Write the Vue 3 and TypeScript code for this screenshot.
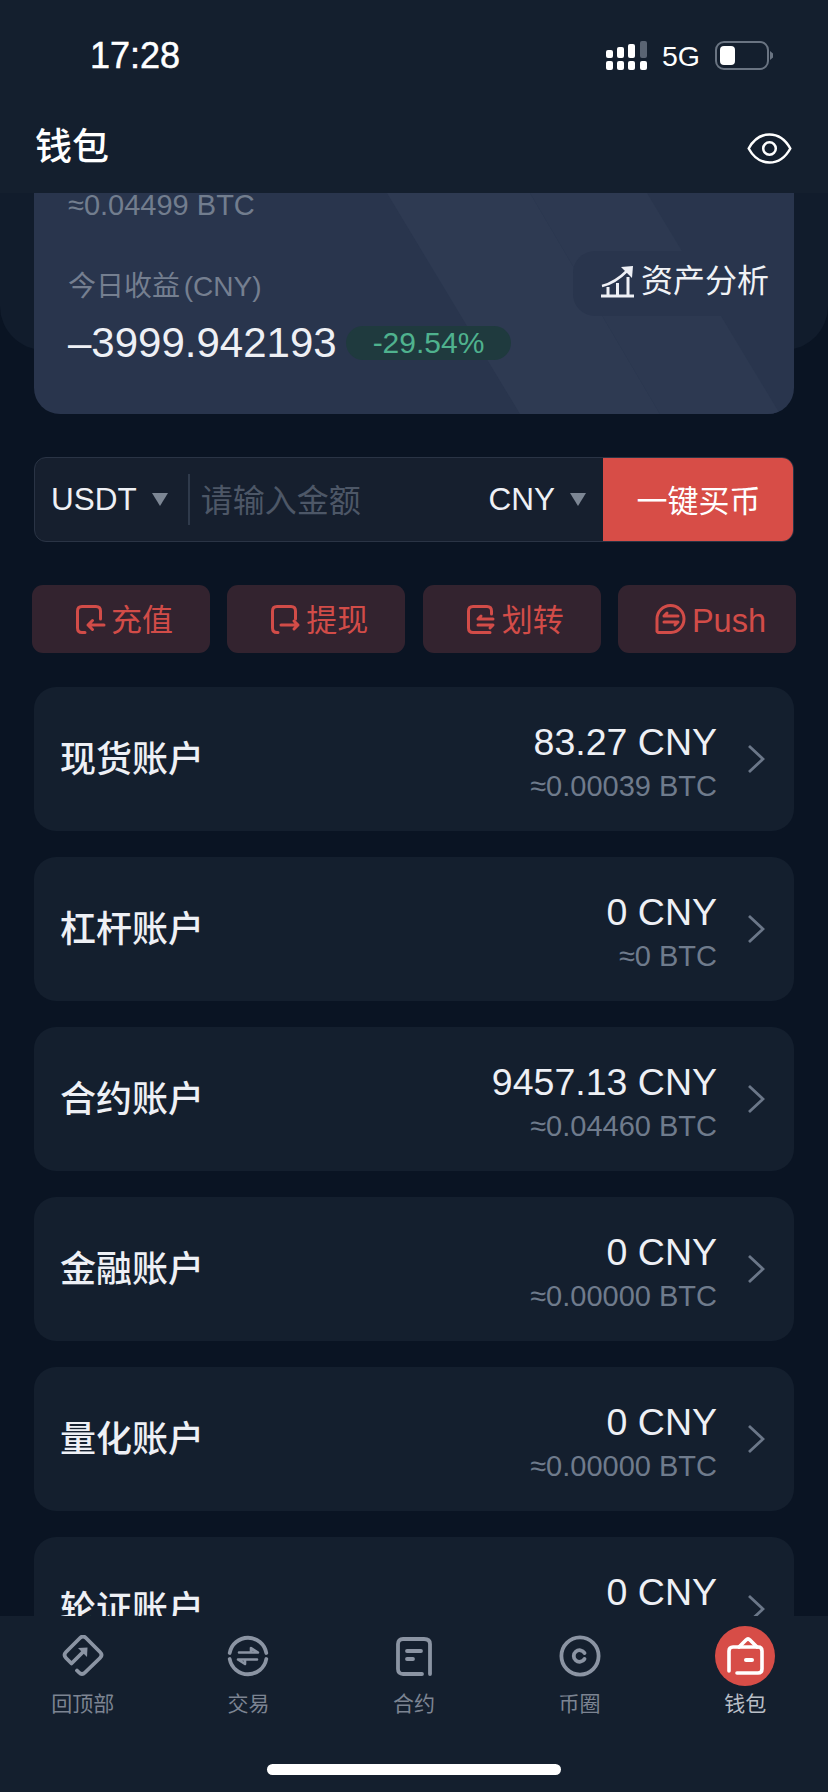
<script setup lang="ts">
interface Account { name: string; value: string; btc: string }
const accounts: Account[] = [
  { name: '现货账户', value: '83.27 CNY', btc: '≈0.00039 BTC' },
  { name: '杠杆账户', value: '0 CNY', btc: '≈0 BTC' },
  { name: '合约账户', value: '9457.13 CNY', btc: '≈0.04460 BTC' },
  { name: '金融账户', value: '0 CNY', btc: '≈0.00000 BTC' },
  { name: '量化账户', value: '0 CNY', btc: '≈0.00000 BTC' },
  { name: '轮证账户', value: '0 CNY', btc: '≈0.00000 BTC' },
]
</script>

<template>
  <div class="page">
    <header class="top">
      <div class="status">
        <span class="time">17:28</span>
        <div class="status-right">
          <svg class="signal" width="42" height="30" viewBox="0 0 42 30" fill="#fff">
            <rect x="0" y="20" width="7" height="9" rx="2" />
            <rect x="11" y="20" width="7" height="9" rx="2" />
            <rect x="22" y="20" width="7" height="9" rx="2" />
            <rect x="34" y="20" width="7" height="9" rx="2" />
            <rect x="0" y="9" width="7" height="8" rx="2" />
            <rect x="11" y="6" width="7" height="11" rx="2" />
            <rect x="22" y="3" width="7" height="14" rx="2" />
            <rect x="34" y="0" width="7" height="17" rx="2" fill="#5a6473" />
          </svg>
          <span class="net">5G</span>
          <svg class="battery" width="59" height="30" viewBox="0 0 59 30">
            <rect x="1" y="1" width="52" height="27" rx="8" fill="none" stroke="#6a7482" stroke-width="2" />
            <rect x="5" y="5" width="15" height="19" rx="4" fill="#fff" />
            <path d="M55 10 L58 12.5 V16.5 L55 19 Z" fill="#6a7482" />
          </svg>
        </div>
      </div>
      <div class="title-row">
        <h1 class="title">钱包</h1>
        <svg class="eye" width="45" height="31" viewBox="0 0 46 32" fill="none" stroke="#fff" stroke-width="2.6">
          <path d="M1.5 16 C7 6 14.5 1.5 23 1.5 S39 6 44.5 16 C39 26 31.5 30.5 23 30.5 S7 26 1.5 16 Z" stroke-linejoin="round" />
          <circle cx="23" cy="16" r="6.5" />
        </svg>
      </div>
    </header>

    <main class="scroll">
      <div class="glow"></div>
      <section class="asset">
        <svg class="stripes" width="760" height="221" viewBox="0 0 760 221">
          <path d="M353 0 H496 L626 221 H486 Z" fill="#2e3a52" />
          <path d="M496 0 H613 L746 221 H626 Z" fill="#2d3951" />
        </svg>
        <div class="asset-btc">≈0.04499 BTC</div>
        <div class="asset-body">
          <div class="asset-left">
            <div class="asset-label">今日收益 (CNY)</div>
            <div class="asset-row">
              <span class="asset-num">–3999.942193</span>
              <span class="pill">-29.54%</span>
            </div>
          </div>
          <div class="analyze">
            <svg width="34" height="32" viewBox="0 0 34 32" fill="none" stroke="#eef0f5" stroke-width="2.6">
              <path d="M0 30 H33" stroke-width="3.2" />
              <path d="M1 20 C10 18 19 12 27 4" />
              <path d="M20 1 L32 0 L31 12 Z" fill="#eef0f5" stroke="none" />
              <path d="M7 29 V21 M16.5 29 V17 M27 29 V11" stroke-width="3" />
            </svg>
            <span>资产分析</span>
          </div>
        </div>
      </section>

      <section class="buy">
        <div class="sel">
          <span>USDT</span><i class="tri"></i>
        </div>
        <span class="divider"></span>
        <span class="placeholder">请输入金额</span>
        <div class="sel cny">
          <span>CNY</span><i class="tri"></i>
        </div>
        <button class="buy-btn">一键买币</button>
      </section>

      <section class="actions">
        <div class="action">
          <svg width="30" height="29" viewBox="0 0 30 29" fill="none" stroke="#d24c48" stroke-width="3" stroke-linecap="round" stroke-linejoin="round">
            <path d="M9 27.5 H6 Q1.5 27.5 1.5 23 V6 Q1.5 1.5 6 1.5 H20 Q24.5 1.5 24.5 6 V14" />
            <path d="M28 20 H12 M16.5 15.5 L12 20 L16.5 24.5" />
          </svg>
          <span>充值</span>
        </div>
        <div class="action">
          <svg width="30" height="29" viewBox="0 0 30 29" fill="none" stroke="#d24c48" stroke-width="3" stroke-linecap="round" stroke-linejoin="round">
            <path d="M7 27.5 H6 Q1.5 27.5 1.5 23 V6 Q1.5 1.5 6 1.5 H20 Q24.5 1.5 24.5 6 V14" />
            <path d="M10 20 H27 M23 16 L27 20 L23 24" />
          </svg>
          <span>提现</span>
        </div>
        <div class="action">
          <svg width="30" height="29" viewBox="0 0 30 29" fill="none" stroke="#d24c48" stroke-width="3" stroke-linecap="round" stroke-linejoin="round">
            <path d="M23 27.5 H6 Q1.5 27.5 1.5 23 V6 Q1.5 1.5 6 1.5 H20 Q24.5 1.5 24.5 6 V9" />
            <path d="M26 14 H11 L14 11 M11 20 H26 L23 23" />
          </svg>
          <span>划转</span>
        </div>
        <div class="action">
          <svg width="32" height="30" viewBox="0 0 32 30" fill="none" stroke="#d24c48" stroke-width="3" stroke-linecap="round" stroke-linejoin="round">
            <path d="M3 28.5 H16 A13.5 13.5 0 1 0 2 15 V27.5 Z" />
            <path d="M23 12 H9 L12 9 M9 18 H23 L20 21" />
          </svg>
          <span class="latin">Push</span>
        </div>
      </section>

      <section class="list">
        <div v-for="a in accounts" :key="a.name" class="row">
          <span class="row-name">{{ a.name }}</span>
          <div class="row-vals">
            <div class="row-val">{{ a.value }}</div>
            <div class="row-btc">{{ a.btc }}</div>
          </div>
          <svg class="chev" width="18" height="30" viewBox="0 0 18 30" fill="none" stroke="#6b7789" stroke-width="2.8">
            <path d="M2 2 L16 15 L2 28" />
          </svg>
        </div>
      </section>
    </main>

    <nav class="tabs">
      <div class="tab">
        <div class="tab-icon">
          <svg width="42" height="42" viewBox="0 0 42 42" fill="none" stroke="#8b94a3" stroke-width="3.8" stroke-linecap="round" stroke-linejoin="round">
            <path d="M15 35.5 L17 37.5 Q20 40.5 23 37.5 L38 23 Q41 20 38 17 L24 3 Q21 0 18 3 L4 17 Q1 20 4 23 L9.5 28.5 L21 17" />
            <path d="M16 13 L25.5 12.5 L25 22 Z" fill="#8b94a3" stroke="none" />
          </svg>
        </div>
        <span>回顶部</span>
      </div>
      <div class="tab">
        <div class="tab-icon">
          <svg width="42" height="42" viewBox="0 0 42 42" fill="none" stroke="#8b94a3" stroke-width="3.8" stroke-linecap="round">
            <path d="M2.7 18 A18.6 18.6 0 0 1 39.3 18" />
            <path d="M2.7 24 A18.6 18.6 0 0 0 39.3 24" />
            <path d="M12 17.5 H31 L24 13 V17.5" stroke-width="2.6" stroke-linejoin="round" />
            <path d="M30 24.5 H11 L18 29 V24.5" stroke-width="2.6" stroke-linejoin="round" />
          </svg>
        </div>
        <span>交易</span>
      </div>
      <div class="tab">
        <div class="tab-icon">
          <svg width="36" height="39" viewBox="0 0 36 39" fill="none" stroke="#8b94a3" stroke-width="3.8" stroke-linecap="round" stroke-linejoin="round">
            <path d="M26 37 H7 Q2 37 2 32 V7 Q2 2 7 2 H28 Q34 2 34 7 V37" />
            <path d="M11 14 H25 M11 22 H17" />
          </svg>
        </div>
        <span>合约</span>
      </div>
      <div class="tab">
        <div class="tab-icon">
          <svg width="42" height="42" viewBox="0 0 42 42" fill="none" stroke="#8b94a3" stroke-width="3.8" stroke-linecap="round">
            <circle cx="21" cy="21" r="18.6" />
            <path d="M25.5 18 A5.8 5.8 0 1 0 25.5 24" stroke-width="3.8" />
          </svg>
        </div>
        <span>币圈</span>
      </div>
      <div class="tab active">
        <div class="tab-icon">
          <span class="wallet">
            <svg width="38" height="38" viewBox="0 0 38 38" fill="none" stroke="#fff" stroke-width="3.6" stroke-linecap="round" stroke-linejoin="round">
              <path d="M3 34 V14 Q3 10 7 10 H32 Q36 10 36 14 V32 Q36 36 32 36 H11" />
              <path d="M13 10 L20 3 Q22 1 24 3 L31 10" />
              <path d="M20 23 H26" stroke-width="4" />
            </svg>
          </span>
        </div>
        <span>钱包</span>
      </div>
      <div class="indicator"></div>
    </nav>
  </div>
</template>

<style>
html, body { margin: 0; background: #0a1423; }
</style>

<style scoped>
.page {
  width: 828px; height: 1792px; display: flex; flex-direction: column; overflow: hidden;
  background: #0a1423; color: #eef0f5; position: relative;
  font-family: "Liberation Sans", "Noto Sans CJK SC", sans-serif;
}
.top { height: 193px; flex: none; background: #141f2e; display: flex; flex-direction: column; }
.status { height: 111px; display: flex; justify-content: space-between; align-items: flex-start; padding: 0 54px 0 90px; }
.time { font-size: 36px; line-height: 40px; margin-top: 36px; color: #fff; -webkit-text-stroke: .5px #fff; }
.status-right { display: flex; align-items: center; margin-top: 41px; }
.net { font-size: 28.5px; line-height: 30px; color: #fff; margin: 0 15px 0 14px; }
.signal, .battery { display: block; }
.title-row { display: flex; justify-content: space-between; align-items: center; padding: 0 36px 0 35px; margin-top: 6px; }
.title { margin: 0; font-size: 37px; line-height: 62px; font-weight: 500; color: #fff; }
.scroll { flex: 1; min-height: 0; overflow: hidden; position: relative; padding: 0 34px; }
.glow { position: absolute; left: 0; right: 0; top: 0; height: 157px; background: #111c2c; border-radius: 0 0 44px 44px; }
.asset { position: relative; height: 221px; background: #29354d; border-radius: 0 0 26px 26px; overflow: hidden; }
.stripes { position: absolute; inset: 0; }
.asset-btc { position: relative; font-size: 29px; line-height: 24px; padding: 0 0 0 34px; color: #727d8e; }
.asset-body { position: relative; display: flex; justify-content: space-between; align-items: flex-start; margin-top: 50px; }
.asset-left { padding-left: 34px; }
.asset-label { font-size: 28px; line-height: 40px; color: #757f90; word-spacing: -4px; }
.asset-row { display: flex; align-items: center; margin-top: 12px; }
.asset-num { font-size: 42px; line-height: 48px; color: #eef0f5; }
.pill { margin-left: 9px; height: 34px; line-height: 34px; padding: 0 27px; border-radius: 17px; background: #1f3a3e; color: #4fb28e; font-size: 30px; }
.analyze { display: flex; align-items: center; gap: 6px; height: 65px; margin-top: -16px; padding: 0 25px 0 28px; background: #29354d; border-radius: 22px 0 0 22px; font-size: 32px; color: #f0f2f6; }
.analyze span { padding-bottom: 12px; }
.analyze svg { margin-bottom: 3px; }
.buy { display: flex; align-items: center; height: 85px; box-sizing: border-box; margin-top: 43px; background: #161f2e; border: 1px solid #2a3445; border-radius: 12px; overflow: hidden; }
.sel { display: flex; align-items: center; font-size: 31.5px; color: #eef0f5; padding-left: 16px; gap: 15px; }
.tri { width: 0; height: 0; border-left: 8.5px solid transparent; border-right: 8.5px solid transparent; border-top: 13px solid #7c8694; }
.divider { width: 2px; height: 51px; background: #2f3a4b; margin-left: 20px; }
.placeholder { font-size: 32px; color: #4d5767; margin-left: 11px; flex: 1; padding-bottom: 4px; }
.cny { padding: 0; margin-right: 17px; gap: 15px; }
.buy-btn { width: 191px; height: 85px; flex: none; border: 0; background: #d74d47; color: #fff; font: inherit; font-size: 31px; padding: 0 0 2px; margin-right: -1px; }
.actions { display: grid; grid-template-columns: repeat(4, 178px); justify-content: space-between; margin: 43px -2px 0; }
.action { height: 68px; box-sizing: border-box; padding-left: 7px; background: #33232f; border-radius: 11px; display: flex; align-items: center; justify-content: center; gap: 5px; color: #d24c48; font-size: 31px; }
.action span { padding-bottom: 4px; }
.action .latin { padding: 4px 0 0; font-size: 32.5px; }
.list { display: flex; flex-direction: column; gap: 26px; margin-top: 34px; }
.row { height: 144px; flex: none; background: #141f2e; border-radius: 22px; display: flex; align-items: center; padding: 0 29px 0 26px; }
.row-name { font-size: 36px; flex: 1; color: #eef0f5; font-weight: 500; padding-bottom: 6px; }
.row-vals { text-align: right; margin-top: 3px; }
.row-val { font-size: 37.5px; line-height: 48px; color: #eef0f5; }
.row-btc { font-size: 29px; line-height: 36px; margin-top: 2px; color: #6f7b8c; }
.chev { margin-left: 30px; display: block; }
.tabs { height: 176px; flex: none; background: #141f2e; display: grid; grid-template-columns: repeat(5, 1fr); align-content: start; position: relative; z-index: 1; }
.tab { display: flex; flex-direction: column; align-items: center; font-size: 21px; color: #7c8492; }
.tab-icon { height: 60px; margin-top: 10px; display: flex; align-items: center; justify-content: center; width: 100%; }
.tab > span { line-height: 30px; margin-top: 3px; }
.tab.active { color: #b9bec6; }
.wallet { width: 60px; height: 60px; border-radius: 50%; background: #d74d47; display: flex; align-items: center; justify-content: center; }
.indicator { position: absolute; left: 267px; top: 148px; width: 294px; height: 11px; border-radius: 6px; background: #fff; }
</style>
